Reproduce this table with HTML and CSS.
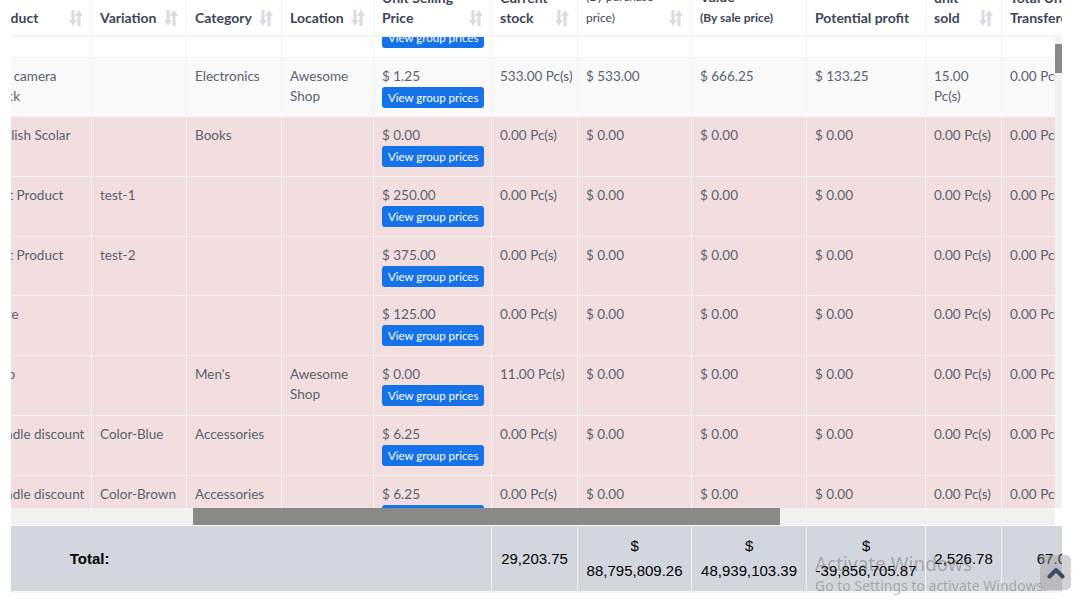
FILE: index.html
```html
<!DOCTYPE html>
<html lang="en">
<head>
<meta charset="utf-8">
<title>Stock Report</title>
<link rel="stylesheet" href="styles.css">
</head>
<body>
<svg class="defs" width="0" height="0" aria-hidden="true">
  <symbol id="sort" viewBox="0 0 14 16">
    <rect x="2.4" y="0" width="3.2" height="11"/>
    <polygon points="0,10 8,10 4,16"/>
    <polygon points="6,6 14,6 10,0"/>
    <rect x="8.4" y="5" width="3.2" height="11"/>
  </symbol>
</svg>

<div class="page">
  <div class="dt">
    <div class="dt-head" id="dtHead">
      <table class="tbl">
        <colgroup>
          <col class="w-action"><col class="w-sku"><col class="w-product"><col class="w-variation"><col class="w-category"><col class="w-location"><col class="w-price"><col class="w-stock"><col class="w-vpur"><col class="w-vsale"><col class="w-profit"><col class="w-sold"><col class="w-transfer"><col class="w-adjust"><col class="w-mfg"><col class="w-prod">
        </colgroup>
        <thead>
          <tr>
            <th><div class="th-in"><span>Action</span></div></th>
            <th><div class="th-in"><span>SKU</span><svg class="sort"><use href="#sort"/></svg></div></th>
            <th><div class="th-in"><span>Product</span><svg class="sort"><use href="#sort"/></svg></div></th>
            <th><div class="th-in"><span>Variation</span><svg class="sort"><use href="#sort"/></svg></div></th>
            <th><div class="th-in"><span>Category</span><svg class="sort"><use href="#sort"/></svg></div></th>
            <th><div class="th-in"><span>Location</span><svg class="sort"><use href="#sort"/></svg></div></th>
            <th><div class="th-in"><span>Unit Selling<br>Price</span><svg class="sort"><use href="#sort"/></svg></div></th>
            <th><div class="th-in"><span>Current<br>stock</span><svg class="sort"><use href="#sort"/></svg></div></th>
            <th><div class="th-in"><span>Current<br>Stock<br>Value<br><small class="sm-normal">(By purchase<br>price)</small></span><svg class="sort"><use href="#sort"/></svg></div></th>
            <th><div class="th-in"><span>Current Stock<br>Value<br><small class="sm-bold">(By sale price)</small></span></div></th>
            <th><div class="th-in"><span>Potential profit</span></div></th>
            <th><div class="th-in"><span>Total<br>unit<br>sold</span><svg class="sort"><use href="#sort"/></svg></div></th>
            <th><div class="th-in"><span>Total Unit<br>Transfered</span><svg class="sort"><use href="#sort"/></svg></div></th>
            <th><div class="th-in"><span>Total Unit<br>Adjusted</span><svg class="sort"><use href="#sort"/></svg></div></th>
            <th><div class="th-in"><span>Current Stock<br>(Manufacturing)</span><svg class="sort"><use href="#sort"/></svg></div></th>
            <th><div class="th-in"><span>Total Unit<br>Produced</span><svg class="sort"><use href="#sort"/></svg></div></th>
          </tr>
        </thead>
      </table>
    </div>

    <div class="dt-body-row">
      <div class="dt-body" id="dtBody">
        <table class="tbl">
          <colgroup>
            <col class="w-action"><col class="w-sku"><col class="w-product"><col class="w-variation"><col class="w-category"><col class="w-location"><col class="w-price"><col class="w-stock"><col class="w-vpur"><col class="w-vsale"><col class="w-profit"><col class="w-sold"><col class="w-transfer"><col class="w-adjust"><col class="w-mfg"><col class="w-prod">
          </colgroup>
          <tbody>
            <tr class="r-plain">
              <td>Actions</td><td>AS0016</td><td>Acer Aspire E 15</td><td></td><td>Electronics</td><td></td>
              <td><div class="price">$ 10.00</div><button class="btn-gp" type="button">View group prices</button></td>
              <td>0.00 Pc(s)</td><td>$ 0.00</td><td>$ 0.00</td><td>$ 0.00</td><td>0.00 Pc(s)</td><td>0.00 Pc(s)</td><td>0.00 Pc(s)</td><td>0.00 Pc(s)</td><td>0.00 Pc(s)</td>
            </tr>
            <tr class="r-striped">
              <td>Actions</td><td>AS0017</td><td>Spy camera<br>Dock</td><td></td><td>Electronics</td><td>Awesome<br>Shop</td>
              <td><div class="price">$ 1.25</div><button class="btn-gp" type="button">View group prices</button></td>
              <td>533.00 Pc(s)</td><td>$ 533.00</td><td>$ 666.25</td><td>$ 133.25</td><td>15.00<br>Pc(s)</td><td>0.00 Pc(s)</td><td>0.00 Pc(s)</td><td>0.00 Pc(s)</td><td>0.00 Pc(s)</td>
            </tr>
            <tr class="r-danger">
              <td>Actions</td><td>AS0018</td><td>English Scolar</td><td></td><td>Books</td><td></td>
              <td><div class="price">$ 0.00</div><button class="btn-gp" type="button">View group prices</button></td>
              <td>0.00 Pc(s)</td><td>$ 0.00</td><td>$ 0.00</td><td>$ 0.00</td><td>0.00 Pc(s)</td><td>0.00 Pc(s)</td><td>0.00 Pc(s)</td><td>0.00 Pc(s)</td><td>0.00 Pc(s)</td>
            </tr>
            <tr class="r-danger">
              <td>Actions</td><td>AS0019-1</td><td>Test Product</td><td>test-1</td><td></td><td></td>
              <td><div class="price">$ 250.00</div><button class="btn-gp" type="button">View group prices</button></td>
              <td>0.00 Pc(s)</td><td>$ 0.00</td><td>$ 0.00</td><td>$ 0.00</td><td>0.00 Pc(s)</td><td>0.00 Pc(s)</td><td>0.00 Pc(s)</td><td>0.00 Pc(s)</td><td>0.00 Pc(s)</td>
            </tr>
            <tr class="r-danger">
              <td>Actions</td><td>AS0019-2</td><td>Test Product</td><td>test-2</td><td></td><td></td>
              <td><div class="price">$ 375.00</div><button class="btn-gp" type="button">View group prices</button></td>
              <td>0.00 Pc(s)</td><td>$ 0.00</td><td>$ 0.00</td><td>$ 0.00</td><td>0.00 Pc(s)</td><td>0.00 Pc(s)</td><td>0.00 Pc(s)</td><td>0.00 Pc(s)</td><td>0.00 Pc(s)</td>
            </tr>
            <tr class="r-danger">
              <td>Actions</td><td>AS0020</td><td>Note</td><td></td><td></td><td></td>
              <td><div class="price">$ 125.00</div><button class="btn-gp" type="button">View group prices</button></td>
              <td>0.00 Pc(s)</td><td>$ 0.00</td><td>$ 0.00</td><td>$ 0.00</td><td>0.00 Pc(s)</td><td>0.00 Pc(s)</td><td>0.00 Pc(s)</td><td>0.00 Pc(s)</td><td>0.00 Pc(s)</td>
            </tr>
            <tr class="r-danger">
              <td>Actions</td><td>AS0021</td><td>Polo</td><td></td><td>Men's</td><td>Awesome<br>Shop</td>
              <td><div class="price">$ 0.00</div><button class="btn-gp" type="button">View group prices</button></td>
              <td>11.00 Pc(s)</td><td>$ 0.00</td><td>$ 0.00</td><td>$ 0.00</td><td>0.00 Pc(s)</td><td>0.00 Pc(s)</td><td>0.00 Pc(s)</td><td>0.00 Pc(s)</td><td>0.00 Pc(s)</td>
            </tr>
            <tr class="r-danger">
              <td>Actions</td><td>AS0022-1</td><td>Bundle discount<br>Pro</td><td>Color-Blue</td><td>Accessories</td><td></td>
              <td><div class="price">$ 6.25</div><button class="btn-gp" type="button">View group prices</button></td>
              <td>0.00 Pc(s)</td><td>$ 0.00</td><td>$ 0.00</td><td>$ 0.00</td><td>0.00 Pc(s)</td><td>0.00 Pc(s)</td><td>0.00 Pc(s)</td><td>0.00 Pc(s)</td><td>0.00 Pc(s)</td>
            </tr>
            <tr class="r-danger">
              <td>Actions</td><td>AS0022-2</td><td>Bundle discount<br>Pro</td><td>Color-Brown</td><td>Accessories</td><td></td>
              <td><div class="price">$ 6.25</div><button class="btn-gp" type="button">View group prices</button></td>
              <td>0.00 Pc(s)</td><td>$ 0.00</td><td>$ 0.00</td><td>$ 0.00</td><td>0.00 Pc(s)</td><td>0.00 Pc(s)</td><td>0.00 Pc(s)</td><td>0.00 Pc(s)</td><td>0.00 Pc(s)</td>
            </tr>
            <tr class="r-danger">
              <td>Actions</td><td>AS0023</td><td>Bundle discount</td><td>Color-Red</td><td>Accessories</td><td></td>
              <td><div class="price">$ 6.25</div><button class="btn-gp" type="button">View group prices</button></td>
              <td>0.00 Pc(s)</td><td>$ 0.00</td><td>$ 0.00</td><td>$ 0.00</td><td>0.00 Pc(s)</td><td>0.00 Pc(s)</td><td>0.00 Pc(s)</td><td>0.00 Pc(s)</td><td>0.00 Pc(s)</td>
            </tr>
          </tbody>
        </table>
      </div>
      <div class="vbar"><div class="vthumb"></div></div>
    </div>

    <div class="hbar"><div class="hthumb"></div></div>

    <div class="dt-foot" id="dtFoot">
      <table class="tbl tfoot-tbl">
        <colgroup>
          <col class="w-action"><col class="w-sku"><col class="w-product"><col class="w-variation"><col class="w-category"><col class="w-location"><col class="w-price"><col class="w-stock"><col class="w-vpur"><col class="w-vsale"><col class="w-profit"><col class="w-sold"><col class="w-transfer"><col class="w-adjust"><col class="w-mfg"><col class="w-prod">
        </colgroup>
        <tfoot>
          <tr>
            <td colspan="7"><strong>Total:</strong></td>
            <td>29,203.75</td>
            <td>$<br>88,795,809.26</td>
            <td>$<br>48,939,103.39</td>
            <td>$<br>-39,856,705.87</td>
            <td>2,526.78</td>
            <td>67.00</td>
            <td>-12.00</td>
            <td>0.00</td>
            <td>0.00</td>
          </tr>
        </tfoot>
      </table>
    </div>
  </div>
</div>

<div class="watermark">
  <div class="wm-title">Activate Windows</div>
  <div class="wm-sub">Go to Settings to activate Windows.</div>
</div>

<a class="back-top" href="#" aria-label="Back to top">
  <svg width="18" height="12" viewBox="0 0 18 12"><polyline points="2.5,9.5 9,3 15.5,9.5" fill="none" stroke="#3e4a5d" stroke-width="4" stroke-linecap="round" stroke-linejoin="round"/></svg>
</a>

<script src="script.js"></script>
</body>
</html>
```

FILE: styles.css
```css
* { box-sizing: border-box; }

html, body {
  margin: 0;
  padding: 0;
  background: #ffffff;
}

body {
  font-family: "Lato", "Noto Sans", sans-serif;
  font-size: 14px;
  line-height: 20px;
  color: #5a6171;
  width: 1084px;
  height: 609px;
  overflow: hidden;
}

.defs { position: absolute; width: 0; height: 0; overflow: hidden; }

.page {
  padding-left: 11px;
}

.dt {
  width: 1051px;
}

/* ---------- shared table ---------- */
.tbl {
  width: 1857px;
  table-layout: fixed;
  border-collapse: separate;
  border-spacing: 0;
  flex-shrink: 0;
}

.w-action   { width: 100px; }
.w-sku      { width: 193px; }
.w-product  { width: 111px; }
.w-variation{ width: 95px; }
.w-category { width: 95px; }
.w-location { width: 92px; }
.w-price    { width: 118px; }
.w-stock    { width: 86px; }
.w-vpur     { width: 114px; }
.w-vsale    { width: 115px; }
.w-profit   { width: 119px; }
.w-sold     { width: 76px; }
.w-transfer { width: 108px; }
.w-adjust   { width: 115px; }
.w-mfg      { width: 160px; }
.w-prod     { width: 160px; }

/* ---------- header ---------- */
.dt-head {
  height: 37px;
  overflow: hidden;
  display: flex;
  flex-direction: column;
  justify-content: flex-end;
  align-items: flex-start;
  background: #fff;
}

.tbl th {
  vertical-align: bottom;
  text-align: left;
  padding: 8px 8px 7px 8px;
  font-weight: 700;
  color: #3e4556;
  white-space: nowrap;
  overflow: hidden;
  border-right: 1px solid #f4f4f4;
  border-bottom: 2px solid #f4f4f4;
}

.th-in {
  display: flex;
  justify-content: space-between;
  align-items: flex-end;
  gap: 4px;
}

.sort {
  width: 14px;
  height: 16px;
  flex-shrink: 0;
  margin-bottom: 2px;
  fill: #d9dce2;
}

.sm-normal {
  font-size: 12px;
  font-weight: 400;
}

.sm-bold {
  font-size: 12px;
  font-weight: 700;
}

/* ---------- body ---------- */
.dt-body-row {
  display: flex;
  height: 471px;
}

.dt-body {
  width: 1044px;
  height: 471px;
  overflow: hidden;
}

.tbl td {
  vertical-align: top;
  padding: 8px;
  height: 59.7px;
  font-size: 13.5px;
  white-space: nowrap;
  overflow: hidden;
  border-top: 1px solid #f4f4f4;
  border-right: 1px solid #f4f4f4;
}

.r-plain td   { background: #ffffff; }
.r-striped td { background: #f9f9f9; }
.r-danger td  { background: #f2dede; }

.price {
  height: 20px;
}

.btn-gp {
  display: block;
  width: fit-content;
  margin-top: 1px;
  height: 21px;
  padding: 0 6px;
  border: 0;
  border-radius: 3px;
  background: #1572e8;
  color: #ffffff;
  font-family: "Lato", "Noto Sans", sans-serif;
  font-size: 11.5px;
  line-height: 21px;
  white-space: nowrap;
}

/* ---------- scrollbars ---------- */
.vbar {
  width: 7px;
  height: 471px;
  background: #f1f1f1;
  display: flex;
  flex-direction: column;
}

.vthumb {
  margin-top: 7px;
  height: 29px;
  background: #898989;
}

.hbar {
  width: 1044px;
  height: 17px;
  background: #f1f1f1;
  display: flex;
}

.hthumb {
  margin-left: 182px;
  width: 587px;
  height: 17px;
  background: #898989;
}

/* ---------- footer ---------- */
.dt-foot {
  width: 1051px;
  overflow: hidden;
  border-top: 1px solid #ffffff;
}

.tfoot-tbl td {
  height: auto;
  background: #d2d6de;
  color: #000000;
  font-family: "Liberation Sans", Arial, sans-serif;
  font-size: 15px;
  line-height: 25px;
  text-align: center;
  vertical-align: middle;
  padding: 7px 8px 8px 8px;
  border-top: 0;
  border-right: 1px solid #f4f4f4;
  border-bottom: 2px solid #f4f4f4;
}

.tfoot-tbl strong {
  font-weight: 700;
}

/* ---------- overlays ---------- */
.watermark {
  position: fixed;
  left: 815px;
  top: 551px;
  color: rgba(80, 80, 80, 0.36);
  font-family: "Noto Sans", "Open Sans", sans-serif;
  pointer-events: none;
}

.wm-title {
  font-size: 19px;
  line-height: 26px;
}

.wm-sub {
  font-size: 14px;
  line-height: 18px;
}

.back-top {
  position: fixed;
  left: 1040px;
  top: 555px;
  width: 31px;
  height: 35px;
  border-radius: 5px;
  background: rgba(150, 150, 150, 0.42);
  display: flex;
  align-items: center;
  justify-content: center;
}
```

FILE: script.js
```js
(function () {
  var left = 323;
  ['dtHead', 'dtBody', 'dtFoot'].forEach(function (id) {
    var el = document.getElementById(id);
    if (el) { el.scrollLeft = left; }
  });
  var body = document.getElementById('dtBody');
  if (body) { body.scrollTop = 40; }
})();
```
